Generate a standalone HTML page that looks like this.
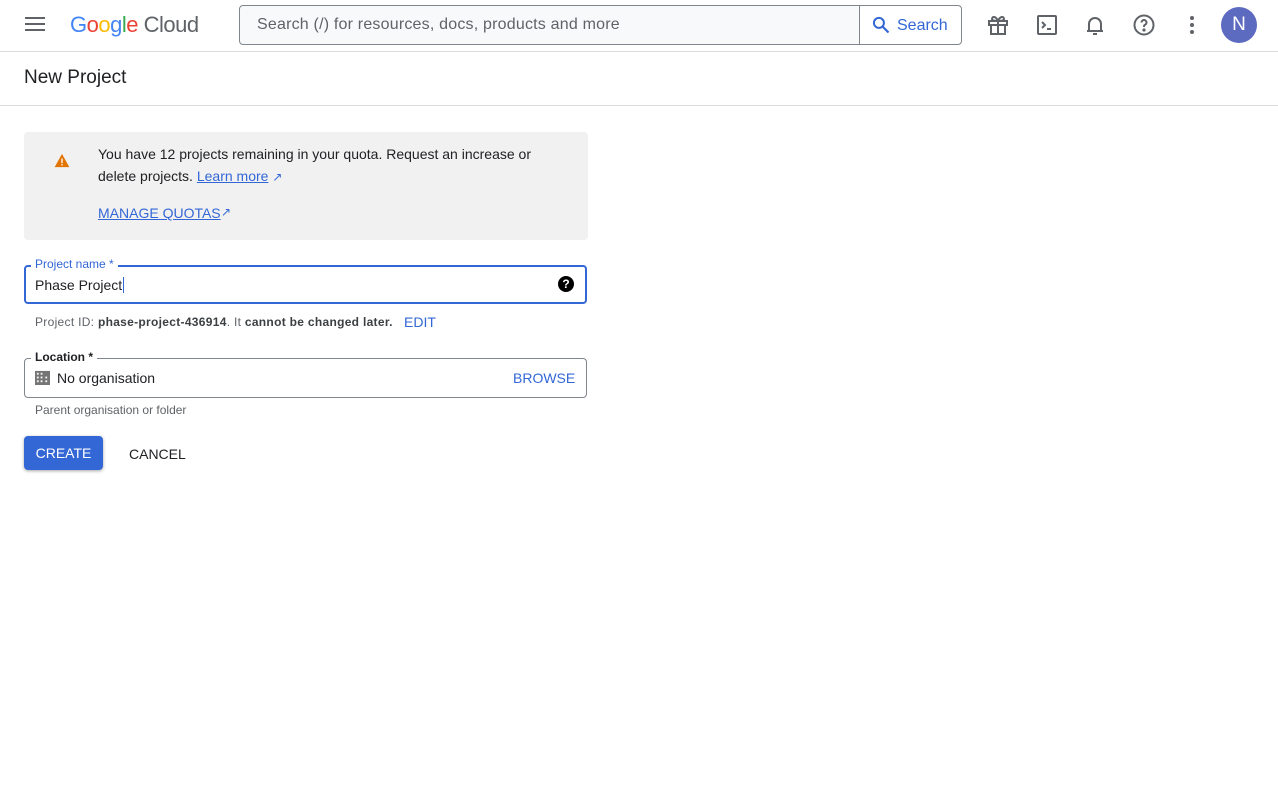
<!DOCTYPE html>
<html><head><meta charset="utf-8"><style>
*{box-sizing:border-box;margin:0;padding:0}
body{width:1278px;height:801px;background:#fff;font-family:"Liberation Sans",Arial,sans-serif;color:#202124;position:relative;overflow:hidden}
.a{position:absolute}
.blue{color:#3367d6}
</style></head><body>
<div class="a" style="left:0;top:51px;width:1278px;height:1px;background:#dadce0"></div>
<div class="a" style="left:25px;top:17px;width:20px;height:2px;background:#5f6368;box-shadow:0 6px 0 #5f6368,0 12px 0 #5f6368"></div>
<div class="a" style="left:70px;top:12px;font-size:22px;letter-spacing:-0.5px"><span style="color:#4285f4">G</span><span style="color:#ea4335">o</span><span style="color:#fbbc04">o</span><span style="color:#4285f4">g</span><span style="color:#34a853">l</span><span style="color:#ea4335">e</span> <span style="color:#5f6368">Cloud</span></div>
<div class="a" style="left:239px;top:5px;width:723px;height:40px;border:1px solid #80868b;border-radius:4px;background:#f8f9fa"></div>
<div class="a" style="left:859px;top:5px;width:1px;height:40px;background:#80868b"></div>
<div class="a" style="left:860px;top:6px;width:101px;height:38px;background:#fff;border-radius:0 4px 4px 0"></div>
<div class="a" style="left:257px;top:16px;font-size:16px;color:#5f6368;letter-spacing:0.2px">Search (/) for resources, docs, products and more</div>
<svg class="a" style="left:871px;top:15px" width="20" height="20" viewBox="0 0 24 24"><circle cx="9.5" cy="9.5" r="6" fill="none" stroke="#3367d6" stroke-width="2.4"/><path d="M14 14l7 7" stroke="#3367d6" stroke-width="2.6"/></svg>
<div class="a" style="left:897px;top:17px;font-size:16px;color:#3367d6">Search</div>
<svg class="a" style="left:986px;top:13px" width="24" height="24" viewBox="0 0 24 24" fill="none" stroke="#5f6368" stroke-width="2"><rect x="3" y="8" width="18" height="4"/><rect x="5" y="12" width="14" height="9"/><path d="M12 8v13M12 8c-2-5-6-5-6-2 0 2 6 2 6 2zM12 8c2-5 6-5 6-2 0 2-6 2-6 2z"/></svg>
<svg class="a" style="left:1035px;top:13px" width="24" height="24" viewBox="0 0 24 24" fill="none" stroke="#5f6368" stroke-width="2"><rect x="3" y="3" width="18" height="18" rx="1"/><path d="M7 9l3 3-3 3M12 16h4"/></svg>
<svg class="a" style="left:1083px;top:13px" width="24" height="24" viewBox="0 0 24 24" fill="none" stroke="#5f6368" stroke-width="2"><path d="M6 17V11a6 6 0 0 1 12 0v6M4 18h16M10 21h4"/></svg>
<svg class="a" style="left:1132px;top:13px" width="24" height="24" viewBox="0 0 24 24" fill="none" stroke="#5f6368" stroke-width="2"><circle cx="12" cy="12" r="9.5"/><path d="M9.5 9.5a2.5 2.5 0 1 1 3.5 2.3c-.7.4-1 .9-1 1.7v.5"/><circle cx="12" cy="17" r=".6" fill="#5f6368"/></svg>
<div class="a" style="left:1190px;top:16px;width:4px;height:4px;border-radius:2px;background:#5f6368;box-shadow:0 7px 0 #5f6368,0 14px 0 #5f6368"></div>
<div class="a" style="left:1221px;top:7px;width:36px;height:36px;border-radius:18px;background:#5c6bc0;color:#fff;font-size:19px;text-align:center;line-height:36px">N</div>
<div class="a" style="left:24px;top:67px;font-size:19px">New Project</div>
<div class="a" style="left:0;top:105px;width:1278px;height:1px;background:#dadce0"></div>
<div class="a" style="left:24px;top:132px;width:564px;height:108px;background:#f1f1f1;border-radius:4px"></div>
<svg class="a" style="left:54px;top:153px" width="16" height="15" viewBox="0 0 24 22"><path d="M12 1L23 21H1z" fill="#e37400"/><rect x="11" y="8" width="2" height="7" fill="#fff"/><rect x="11" y="16.5" width="2" height="2" fill="#fff"/></svg>
<div class="a" style="left:98px;top:143px;font-size:14px;line-height:22px;width:460px">You have 12 projects remaining in your quota. Request an increase or delete projects. <span class="blue" style="text-decoration:underline">Learn more</span> <span class="blue" style="font-size:12px">↗</span></div>
<div class="a blue" style="left:98px;top:205px;font-size:14px;text-decoration:underline">MANAGE QUOTAS</div><div class="a blue" style="left:221px;top:205px;font-size:12px">↗</div>
<div class="a" style="left:24px;top:265px;width:563px;height:39px;border:2px solid #3367d6;border-radius:4px"></div>
<div class="a" style="left:31px;top:257px;background:#fff;padding:0 4px;font-size:12px;color:#3367d6">Project name *</div>
<div class="a" style="left:35px;top:277px;font-size:14px">Phase Project<span style="border-left:1px solid #3367d6;margin-left:1px"></span></div>
<div class="a" style="left:558px;top:276px;width:16px;height:16px;border-radius:8px;background:#000;color:#fff;font-size:12px;font-weight:bold;text-align:center;line-height:16px">?</div>
<div class="a" style="left:35px;top:315px;font-size:12px;color:#5f6368;letter-spacing:0.3px">Project ID: <b style="color:#3c4043">phase-project-436914</b>. It <b style="color:#3c4043">cannot be changed later.</b></div>
<div class="a blue" style="left:404px;top:314px;font-size:14px">EDIT</div>
<div class="a" style="left:24px;top:358px;width:563px;height:40px;border:1px solid #80868b;border-radius:4px"></div>
<div class="a" style="left:31px;top:350px;background:#fff;padding:0 4px;font-size:12px;font-weight:bold">Location *</div>
<svg class="a" style="left:35px;top:370px" width="15" height="15" viewBox="0 0 16 16"><rect x="0" y="1" width="16" height="15" fill="#757575"/><g fill="#f1f1f1"><rect x="2" y="3" width="2" height="2"/><rect x="6" y="3" width="2" height="2"/><rect x="2" y="7" width="2" height="2"/><rect x="6" y="7" width="2" height="2"/><rect x="11" y="7" width="2" height="2"/><rect x="2" y="11" width="2" height="2"/><rect x="6" y="11" width="2" height="2"/><rect x="11" y="11" width="2" height="2"/></g></svg>
<div class="a" style="left:57px;top:370px;font-size:14px">No organisation</div>
<div class="a blue" style="left:513px;top:370px;font-size:14px">BROWSE</div>
<div class="a" style="left:35px;top:403px;font-size:12px;color:#5f6368">Parent organisation or folder</div>
<div class="a" style="left:24px;top:436px;width:79px;height:34px;background:#3367d6;border-radius:4px;box-shadow:0 1px 3px rgba(0,0,0,.35);color:#fff;font-size:14px;text-align:center;line-height:34px">CREATE</div>
<div class="a" style="left:129px;top:446px;font-size:14px">CANCEL</div>
</body></html>
